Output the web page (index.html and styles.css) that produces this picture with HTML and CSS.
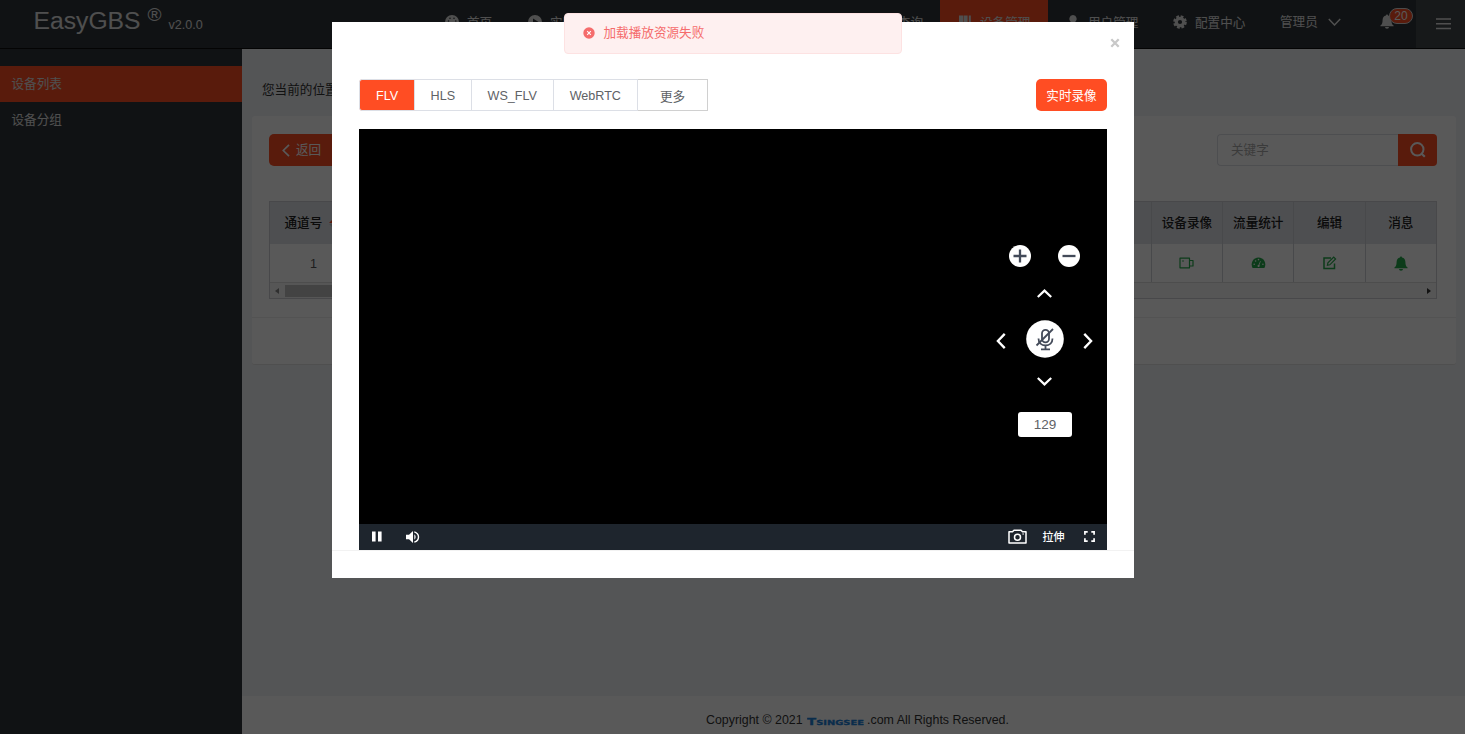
FILE: index.html
```html
<!DOCTYPE html>
<html lang="zh-CN">
<head>
<meta charset="utf-8">
<title>EasyGBS</title>
<link rel="stylesheet" href="styles.css">
</head>
<body>
<div class="app">
  <header class="topbar">
    <div class="brand"><span class="brand-name">EasyGBS</span><span class="brand-reg">®</span><span class="brand-ver">v2.0.0</span></div>
    <nav class="nav">
      <a class="nav-item nav-home"><svg class="nav-icon" viewBox="0 0 14 14"><circle cx="7" cy="7" r="7" fill="currentColor"/><g fill="#31363b"><circle cx="3.500" cy="6" r=".8"/><circle cx="5" cy="3.300" r=".8"/><circle cx="9" cy="3.300" r=".8"/><circle cx="10.800" cy="6" r=".8"/></g></svg><span>首页</span></a>
      <a class="nav-item nav-live"><svg class="nav-icon" viewBox="0 0 14 14"><circle cx="7" cy="7" r="7" fill="currentColor"/><path d="M5 3.600v6.800L10.600 7z" fill="#31363b"/></svg><span>实时</span></a>
      <a class="nav-item nav-query"><span>查询</span></a>
      <a class="nav-item nav-active"><svg class="nav-icon" viewBox="0 0 14 14"><path d="M1 .5h4.500v12H1zM6 .5h3.600v12H6zM10.800.5h2v12h-2z" fill="currentColor"/></svg><span>设备管理</span></a>
      <a class="nav-item"><svg class="nav-icon" viewBox="0 0 14 14"><path d="M7 0a4 4 0 0 1 2 7.300c2.500.7 4 2.500 4 5.700H1c0-3.200 1.500-5 4-5.700A4 4 0 0 1 7 0z" fill="currentColor"/></svg><span>用户管理</span></a>
      <a class="nav-item nav-config"><svg class="nav-icon" viewBox="0 0 14 14"><g fill="none" stroke="currentColor"><circle cx="7" cy="7" r="3.700" stroke-width="3.200"/><circle cx="7" cy="7" r="5.700" stroke-width="2.200" stroke-dasharray="2.800 1.677"/></g></svg><span>配置中心</span></a>
      <a class="nav-item nav-user"><span>管理员</span><svg class="nav-chevron" viewBox="0 0 13 8"><path d="M.8 1l5.700 6L12.200 1" fill="none" stroke="currentColor" stroke-width="1.500"/></svg></a>
      <a class="nav-bell"><svg class="bell-icon" viewBox="0 0 14 15"><path d="M7 .5c.7 0 1 .5 1 1.100C10.200 2 11.400 3.900 11.400 6c0 3 .7 4.500 2.200 5.500v.8H.4v-.8C1.900 10.500 2.600 9 2.600 6c0-2.100 1.200-4 3.400-4.400C6 1 6.300.5 7 .5zM5 13h4a2 1.800 0 0 1-4 0z" fill="currentColor"/></svg><span class="badge">20</span></a>
      <a class="nav-menu"><svg viewBox="0 0 15 12"><path d="M0 1h15M0 5.700h15M0 10.500h15" stroke="currentColor" stroke-width="1.500"/></svg></a>
    </nav>
  </header>
  <div class="body">
    <aside class="sidebar">
      <a class="side-item side-active">设备列表</a>
      <a class="side-item">设备分组</a>
    </aside>
    <main class="main">
      <div class="crumb">您当前的位置</div>
      <section class="panel">
        <div class="tools">
          <button class="back"><svg viewBox="0 0 8 13"><path d="M7 .8L1.300 6.500 7 12.200" fill="none" stroke="currentColor" stroke-width="1.700"/></svg>返回</button>
          <div class="search"><div class="search-input">关键字</div><button class="search-btn"><svg viewBox="0 0 16 16"><circle cx="7.300" cy="7.300" r="6.200" fill="none" stroke="currentColor" stroke-width="2"/><path d="M11.300 11.500l3.500 3.300" stroke="currentColor" stroke-width="2.200"/></svg></button></div>
        </div>
        <div class="table">
          <div class="tr thead">
            <div class="cell cell-first">通道号<svg class="sort" viewBox="0 0 8 9"><path d="M4 0l4 4H0z" fill="#ff4d23"/><path d="M4 9L0 5h8z" fill="#c0c4cc"/></svg></div>
            <div class="cell">设备录像</div><div class="cell">流量统计</div><div class="cell">编辑</div><div class="cell">消息</div>
          </div>
          <div class="tr tbody">
            <div class="cell cell-first cell-num">1</div>
            <div class="cell"><svg class="act" viewBox="0 0 15 14"><path d="M1 2.200h9.500v9.600H1zM10.500 4.500h3.500v5.500h-3.500" fill="none" stroke="currentColor" stroke-width="1.200" stroke-linejoin="round"/><circle cx="4" cy="5" r=".8" fill="currentColor"/></svg></div>
            <div class="cell"><svg class="act" viewBox="0 0 15 14"><path d="M7.500 1.500A7 7 0 0 1 13.400 12H1.600A7 7 0 0 1 7.500 1.500z" fill="currentColor"/><g fill="#fff"><circle cx="3.200" cy="8.200" r=".8"/><circle cx="4.600" cy="5" r=".8"/><circle cx="7.500" cy="3.600" r=".8"/><circle cx="11.900" cy="8.200" r=".8"/><path d="M9.200 5l.6.300-1.400 3.800a1.100 1.100 0 1 1-.8-.3z"/></g></svg></div>
            <div class="cell"><svg class="act" viewBox="0 0 15 14"><path d="M9 2H2v10.500h10.500V7.500" fill="none" stroke="currentColor" stroke-width="1.500"/><path d="M5.400 9.300l.5-2.400 5.800-5.800 1.900 1.900-5.800 5.800z" fill="none" stroke="currentColor" stroke-width="1.200"/></svg></div>
            <div class="cell"><svg class="act act-bell" viewBox="0 0 14 15"><path d="M7 .5c.7 0 1 .5 1 1.100C10.200 2 11.400 3.900 11.400 6c0 3 .7 4.500 2.200 5.500v.8H.4v-.8C1.900 10.500 2.600 9 2.600 6c0-2.100 1.200-4 3.400-4.400C6 1 6.300.5 7 .5zM5 13h4a2 1.800 0 0 1-4 0z" fill="currentColor"/></svg></div>
          </div>
          <div class="scroll"><svg class="arrow" viewBox="0 0 4 6"><path d="M4 0v6L0 3z" fill="#888"/></svg><div class="thumb"></div><svg class="arrow arrow-right" viewBox="0 0 4 6"><path d="M0 0v6l4-3z" fill="#333"/></svg></div>
        </div>
        <div class="pager"></div>
      </section>
      <footer class="footer">Copyright © 2021 <svg class="logo" viewBox="0 0 58 10"><text x="0" y="9" textLength="57" lengthAdjust="spacingAndGlyphs"><tspan class="logo-big">T</tspan><tspan>SINGSEE</tspan></text></svg>.com All Rights Reserved.</footer>
    </main>
  </div>
</div>
<div class="mask"></div>
<div class="modal">
  <svg class="close" viewBox="0 0 10 10"><path d="M1.300 1.300l7.400 7.400M8.700 1.300L1.300 8.700" stroke="#c8c8c8" stroke-width="2.300"/></svg>
  <div class="modal-tools">
    <div class="tabs"><span class="tab tab-flv">FLV</span><span class="tab tab-hls">HLS</span><span class="tab tab-ws">WS_FLV</span><span class="tab tab-rtc">WebRTC</span><span class="tab tab-more">更多</span></div>
    <button class="record">实时录像</button>
  </div>
  <div class="player">
    <div class="screen">
      <div class="ptz">
        <div class="zoom-row">
          <svg class="zoom-btn" viewBox="0 0 22 22"><circle cx="11" cy="11" r="11" fill="#fff"/><path d="M4.500 11h13M11 4.500v13" stroke="#434a59" stroke-width="2.300"/></svg>
          <svg class="zoom-btn" viewBox="0 0 22 22"><circle cx="11" cy="11" r="11" fill="#fff"/><path d="M4.500 11h13" stroke="#434a59" stroke-width="2.300"/></svg>
        </div>
        <svg class="chev-v" viewBox="0 0 15 9"><path d="M.8 8l6.700-6.400L14.200 8" fill="none" stroke="#fff" stroke-width="2.200"/></svg>
        <div class="mid-row">
          <svg class="chev-h" viewBox="0 0 9 15"><path d="M8 .8L1.600 7.500 8 14.200" fill="none" stroke="#fff" stroke-width="2.200"/></svg>
          <svg class="mic" viewBox="0 0 38 38"><circle cx="19" cy="19" r="18.800" fill="#fff"/><g fill="none" stroke="#434a59" stroke-width="1.800"><rect x="16" y="9.800" width="7" height="12.500" rx="3.500"/><path d="M12.500 18.500c0 4.500 3 7 7 7s7-2.500 7-7M19.500 25.500v4M15 29.300h9"/><path d="M10.500 25.500L27 9"/></g></svg>
          <svg class="chev-h" viewBox="0 0 9 15"><path d="M1 .8l6.400 6.700L1 14.200" fill="none" stroke="#fff" stroke-width="2.200"/></svg>
        </div>
        <svg class="chev-v" viewBox="0 0 15 9"><path d="M.8 1l6.700 6.400L14.200 1" fill="none" stroke="#fff" stroke-width="2.200"/></svg>
        <div class="speed">129</div>
      </div>
    </div>
    <div class="controls">
      <svg class="pause" viewBox="0 0 10 11"><path d="M0 .5h3.600v10H0zM6 .5h3.600v10H6z" fill="#fff"/></svg>
      <svg class="volume" viewBox="0 0 14 12"><path d="M0 3.800h3L7 0v12L3 8.200H0z" fill="#fff"/><path d="M8.300 3.300c1.800 1.200 1.800 4.200 0 5.400z" fill="#fff"/><path d="M8.300.8c5.600 1.700 5.600 8.700 0 10.400" fill="none" stroke="#fff" stroke-width="1.400"/></svg>
      <svg class="camera" viewBox="0 0 19 15"><path d="M1 2.800h3.500L6 1.200h7l1.500 1.600H18V14H1z" fill="none" stroke="#fff" stroke-width="1.500" stroke-linejoin="round"/><circle cx="9.500" cy="8.200" r="3" fill="none" stroke="#fff" stroke-width="1.500"/><path d="M14.300 5h1.700" stroke="#fff"/></svg>
      <span class="stretch">拉伸</span>
      <svg class="full" viewBox="0 0 11 11"><path d="M.9 3.700V.9h2.800M7.300.9h2.800v2.800M10.100 7.300v2.800H7.300M3.700 10.100H.9V7.300" fill="none" stroke="#fff" stroke-width="1.700"/></svg>
    </div>
  </div>
  <div class="modal-foot"></div>
</div>
<div class="toast"><svg viewBox="0 0 12 12"><circle cx="6" cy="6" r="5.700" fill="#f56c6c"/><path d="M4.200 4.200l3.600 3.600M7.800 4.200L4.200 7.800" stroke="#fff" stroke-width="1.100"/></svg><span>加载播放资源失败</span></div>
</body>
</html>
```
FILE: styles.css
```css
* { box-sizing: border-box; }
body {
  margin: 0;
  height: 734px;
  overflow: hidden;
  position: relative;
  font: 12.6px/18px "Liberation Sans", "Noto Sans CJK SC", sans-serif;
  color: #333;
}
svg { display: block; flex: none; }
button { border: 0; padding: 0; font: inherit; color: #fff; background: #ff4d23; }
.app { height: 734px; display: flex; flex-direction: column; }

.topbar { height: 49px; flex: none; display: flex; justify-content: space-between; background: #2f3439; border-bottom: 1px solid #0c0d0e; color: #e3e3e3; }
.brand { display: flex; padding-left: 33.500px; }
.brand-name { font-size: 24.700px; line-height: 42px; }
.brand-reg { font-size: 19px; line-height: 30px; margin-left: 7px; }
.brand-ver { font-size: 12.600px; line-height: 50px; margin-left: 7px; }
.nav { display: flex; height: 48px; }
.nav-item { display: flex; width: 108px; padding: 0 0 4px 18px; align-items: center; flex: none; white-space: nowrap; }
.nav-item span { margin-top: 1px; }
.nav-icon { width: 14px; height: 14px; margin-right: 8px; }
.nav-home { width: 83px; }
.nav-query { width: 322px; justify-content: flex-end; padding-right: 17px; }
.nav-config { padding-left: 17px; }
.nav-active { background: #ff4d23; }
.nav-user { width: 98px; padding-left: 16px; }
.nav-user span { margin-top: 0; }
.nav-chevron { width: 13px; height: 8px; margin-left: 10.500px; }
.nav-bell { width: 54px; display: flex; position: relative; padding: 14px 0 0 18px; }
.bell-icon { width: 14px; height: 15px; }
.badge { position: absolute; left: 27px; top: 8px; width: 24px; height: 16px; border: 1px solid #d9d9d9; border-radius: 8px; background: #ff4d23; color: #fff; font-size: 12px; line-height: 15px; text-align: center; }
.nav-menu { width: 49px; display: flex; padding: 17.500px 0 0 20px; background: #44484c; }
.nav-menu svg { width: 15px; height: 12px; }

.body { flex: 1; display: flex; min-height: 0; }
.sidebar { width: 242px; flex: none; padding-top: 17px; background: #2f3439; color: #e3e3e3; }
.side-item { display: block; height: 35.500px; padding-left: 11.500px; line-height: 36px; }
.side-active { background: #ff4d23; }
.main { flex: 1; display: flex; flex-direction: column; background: #f0f2f5; }
.crumb { height: 67px; padding: 32px 0 0 20px; }
.panel { height: 249px; margin: 0 9.500px; padding: 18px 18.500px 0 17.500px; background: #fff; border-radius: 3px; border-bottom: 1px solid #e2e2e2; }
.tools { display: flex; justify-content: space-between; }
.back { width: 72px; height: 32px; border-radius: 5px; display: flex; align-items: center; padding-left: 13px; gap: 6px; }
.back svg { width: 8px; height: 13px; }
.search { display: flex; height: 32px; }
.search-input { width: 181px; border: 1px solid #dcdfe6; border-right: 0; border-radius: 4px 0 0 4px; padding-left: 13px; line-height: 31px; color: #aaa; }
.search-btn { width: 39px; border-radius: 0 4px 4px 0; display: flex; align-items: center; justify-content: center; }
.search-btn svg { width: 16px; height: 16px; }
.table { margin-top: 35px; height: 98px; border: 1px solid #cdcfd3; }
.tr { display: flex; }
.thead { height: 42px; background: #dfe2e8; font-weight: 500; color: #222; }
.tbody { height: 39px; border-bottom: 1px solid #dcdcdc; color: #24a84a; }
.cell { width: 71.300px; flex: none; border-left: 1px solid #cdd0d6; display: flex; align-items: center; justify-content: center; }
.cell-first { flex: 1; border-left: 0; justify-content: flex-start; padding-left: 14.500px; }
.cell-num { padding: 2px 0 0 40px; color: #555; }
.sort { width: 8px; height: 9px; margin-left: 7px; }
.act { width: 15px; height: 14px; }
.act-bell { width: 14px; height: 15px; }
.scroll { display: flex; align-items: center; height: 15px; padding: 0 5px; background: #f5f5f5; }
.arrow { width: 4px; height: 6px; }
.thumb { width: 780px; height: 12px; margin-left: 6px; background: #c1c1c1; }
.arrow-right { margin-left: auto; }
.pager { margin: 18px -18.500px 0 -17.500px; border-top: 1px solid #eee; }
.footer { margin-top: auto; height: 38px; background: #fff; display: flex; justify-content: center; align-items: flex-start; padding: 15px 0 0 8px; white-space: pre; font-size: 12.400px; }
.logo { width: 58px; height: 10px; margin: 4.500px 2px 0 1px; font: bold 7px "DejaVu Sans", sans-serif; fill: #1d80d8; stroke: #1d80d8; stroke-width: .3px; }
.logo-big { font-size: 9.500px; }

.mask { position: absolute; inset: 0; background: rgba(0, 0, 0, .65); }
.modal { position: absolute; left: 332.300px; top: 21.500px; width: 801.700px; height: 556.500px; background: #fff; }
.close { width: 10px; height: 10px; margin: 16px 14px 0 auto; }
.modal-tools { display: flex; justify-content: space-between; margin: 31.500px 27px 0 27px; height: 32px; }
.tabs { display: flex; color: #606266; }
.tab { display: block; text-align: center; line-height: 32.500px; border: 1px solid #dcdfe6; border-left: 0; }
.tab-flv { width: 55.500px; background: #ff4d23; color: #fff; border-radius: 3px 0 0 3px; border-left: 1px solid #dcdfe6; }
.tab-hls { width: 57px; }
.tab-ws { width: 82px; }
.tab-rtc { width: 84px; }
.tab-more { width: 70.500px; line-height: 34.500px; border-color: #d0d0d0; }
.record { width: 71px; height: 32px; border-radius: 5px; padding-top: 1px; }
.player { margin: 18px 27px 0 27px; }
.screen { height: 394.500px; background: #000; position: relative; }
.ptz { position: absolute; left: 637.200px; top: 116px; width: 97px; display: flex; flex-direction: column; align-items: center; }
.zoom-row { display: flex; gap: 27px; margin-bottom: 21.500px; }
.zoom-btn { width: 22px; height: 22px; }
.chev-v { width: 15px; height: 9px; }
.mid-row { width: 97px; display: flex; justify-content: space-between; align-items: center; margin: 22.500px 0 19px; }
.mic { width: 38px; height: 38px; }
.chev-h { width: 10px; height: 16px; margin-top: 4px; }
.speed { width: 53.500px; height: 25px; margin-top: 25.500px; border-radius: 3px; background: #fff; color: #606266; line-height: 25px; text-align: center; font-size: 13.500px; }
.controls { height: 26.500px; background: #1e252d; display: flex; align-items: center; padding: 0 12px 0 13px; color: #fff; font-size: 11px; }
.pause { width: 10px; height: 11px; }
.volume { width: 14px; height: 12px; margin-left: 24px; }
.camera { width: 19px; height: 15px; margin-left: auto; }
.stretch { margin: 0 19.500px 0 15px; font-weight: 500; }
.full { width: 11px; height: 11px; }
.modal-foot { border-top: 1px solid #f2f2f2; }
.toast { position: absolute; left: 564px; top: 12.500px; width: 338px; height: 41px; border: 1px solid #fde2e2; border-radius: 4px; background: #fef0f0; color: #f56c6c; display: flex; align-items: center; padding-left: 18px; gap: 8.500px; }
.toast svg { width: 12px; height: 12px; }
```
